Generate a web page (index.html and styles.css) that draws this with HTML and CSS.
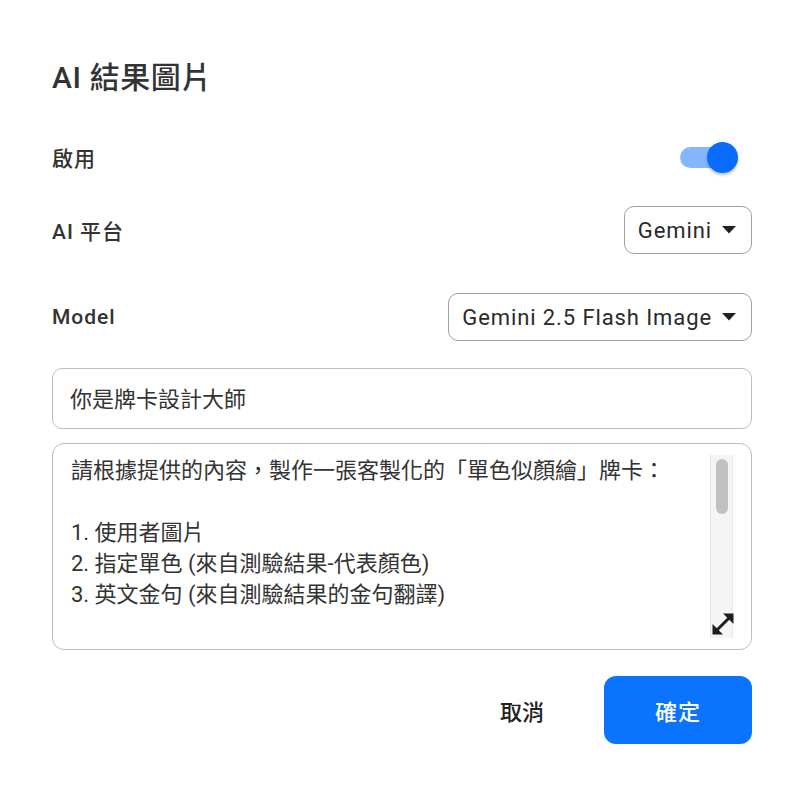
FILE: index.html
```html
<!DOCTYPE html>
<html lang="zh-Hant">
<head>
  <meta charset="UTF-8" />
  <meta name="viewport" content="width=device-width, initial-scale=1.0"/>
  <title>AI 結果圖片</title>
  <link rel="stylesheet" href="styles.css">
</head>
<body>
  <div class="dialog">
    <h1 class="titulo">AI 結果圖片</h1>

    <div class="fila fila-switch">
      <span class="etiqueta">啟用</span>
      <span class="switch">
        <span class="switch-track"></span>
        <span class="switch-thumb"></span>
      </span>
    </div>

    <div class="fila fila-plataforma">
      <span class="etiqueta">AI 平台</span>
      <button class="selector">
        <span>Gemini</span>
        <svg width="14" height="8" viewBox="0 0 14 8"><path d="M0 0 L14 0 L7 7.5 Z" fill="#222"/></svg>
      </button>
    </div>

    <div class="fila fila-modelo">
      <span class="etiqueta">Model</span>
      <button class="selector">
        <span>Gemini 2.5 Flash Image</span>
        <svg width="14" height="8" viewBox="0 0 14 8"><path d="M0 0 L14 0 L7 7.5 Z" fill="#222"/></svg>
      </button>
    </div>

    <input type="text" class="campo" value="你是牌卡設計大師" />

    <div class="caja-prompt">
      <textarea class="prompt" spellcheck="false">請根據提供的內容，製作一張客製化的「單色似顏繪」牌卡：

1. 使用者圖片
2. 指定單色 (來自測驗結果-代表顏色)
3. 英文金句 (來自測驗結果的金句翻譯)

風格要求：
- 以指定單色繪製人物似顏繪
- 背景保持簡潔留白
- 英文金句置於牌卡下方

輸出規格：
- 直式牌卡，比例 2:3
- 高解析度圖片
- 不要加入其他文字</textarea>
      <div class="barra">
        <div class="barra-thumb"></div>
      </div>
      <svg class="resize-icono" width="26" height="26" viewBox="0 0 26 26">
        <path d="M5 21 L21 5" stroke="#1e1e1e" stroke-width="3" stroke-linecap="square"/>
        <path d="M13 2.5 L23.5 2.5 L23.5 13 Z" fill="#1e1e1e"/>
        <path d="M2.5 13 L2.5 23.5 L13 23.5 Z" fill="#1e1e1e"/>
      </svg>
    </div>

    <div class="acciones">
      <button class="btn-cancelar">取消</button>
      <button class="btn-confirmar">確定</button>
    </div>
  </div>
</body>
</html>
```

FILE: styles.css
```css
body {
  margin: 0;
  background: #fff;
  font-family: Roboto, "Noto Sans CJK TC", sans-serif;
  color: #333;
}
.dialog {
  padding: 60px 48px 0 52px;
}
.titulo {
  margin: 0;
  font-size: 30px;
  line-height: 36px;
  font-weight: 500;
  letter-spacing: 0.6px;
  color: #333;
}
.fila {
  display: flex;
  align-items: center;
  justify-content: space-between;
  height: 48px;
}
.fila-switch {
  margin-top: 37px;
}
.fila-plataforma {
  margin-top: 25px;
}
.fila-modelo {
  margin-top: 39px;
}
.etiqueta {
  font-size: 21px;
  font-weight: 500;
  letter-spacing: 1px;
  color: #333;
}
.switch {
  position: relative;
  width: 58px;
  height: 32px;
  margin-right: 14px;
}
.switch-track {
  position: absolute;
  left: 0;
  top: 6px;
  width: 46px;
  height: 21px;
  border-radius: 11px;
  background: #86b6ff;
}
.switch-thumb {
  position: absolute;
  right: 0;
  top: 1px;
  width: 31px;
  height: 31px;
  border-radius: 50%;
  background: #0a6cff;
  box-shadow: 0 2px 3px rgba(0,0,0,0.25);
}
.selector {
  display: flex;
  align-items: center;
  gap: 10px;
  height: 48px;
  padding: 0 15px 0 13px;
  background: #fff;
  border: 1.5px solid #a0a0a0;
  border-radius: 10px;
  font-family: Roboto, "Noto Sans CJK TC", sans-serif;
  font-size: 22px;
  letter-spacing: 0.9px;
  color: #2a2a2a;
}
.campo {
  display: block;
  box-sizing: border-box;
  width: 100%;
  height: 61px;
  margin-top: 27px;
  padding: 0 17px 3px;
  border: 1.5px solid #bdbdbd;
  border-radius: 10px;
  font-family: Roboto, "Noto Sans CJK TC", sans-serif;
  font-size: 22px;
  color: #333;
  outline: none;
}
.caja-prompt {
  position: relative;
  display: flex;
  box-sizing: border-box;
  height: 207px;
  margin-top: 14px;
  padding: 11px 18px 11px 12px;
  border: 1.5px solid #bdbdbd;
  border-radius: 12px;
}
.prompt {
  flex: 1;
  margin: 0;
  padding: 0 0 0 6px;
  border: none;
  outline: none;
  resize: none;
  overflow: hidden;
  font-family: Roboto, "Noto Sans CJK TC", sans-serif;
  font-size: 22px;
  line-height: 31px;
  color: #333;
  white-space: pre;
}
.barra {
  width: 21px;
  background: #f5f5f5;
  border-left: 1px solid #e8e8e8;
  border-right: 1px solid #e8e8e8;
  padding-top: 4px;
}
.barra-thumb {
  width: 12px;
  height: 55px;
  margin-left: 5px;
  border-radius: 6px;
  background: #c1c1c1;
}
.resize-icono {
  position: absolute;
  right: 15px;
  bottom: 12px;
}
.acciones {
  display: flex;
  justify-content: flex-end;
  align-items: center;
  gap: 34px;
  margin-top: 26px;
}
.btn-cancelar {
  width: 96px;
  height: 68px;
  background: none;
  border: none;
  font-family: Roboto, "Noto Sans CJK TC", sans-serif;
  font-size: 22px;
  font-weight: 500;
  color: #222;
}
.btn-confirmar {
  width: 148px;
  height: 68px;
  background: #0a74ff;
  border: none;
  border-radius: 12px;
  font-family: Roboto, "Noto Sans CJK TC", sans-serif;
  font-size: 22px;
  font-weight: 500;
  letter-spacing: 1px;
  color: #fff;
}
```
